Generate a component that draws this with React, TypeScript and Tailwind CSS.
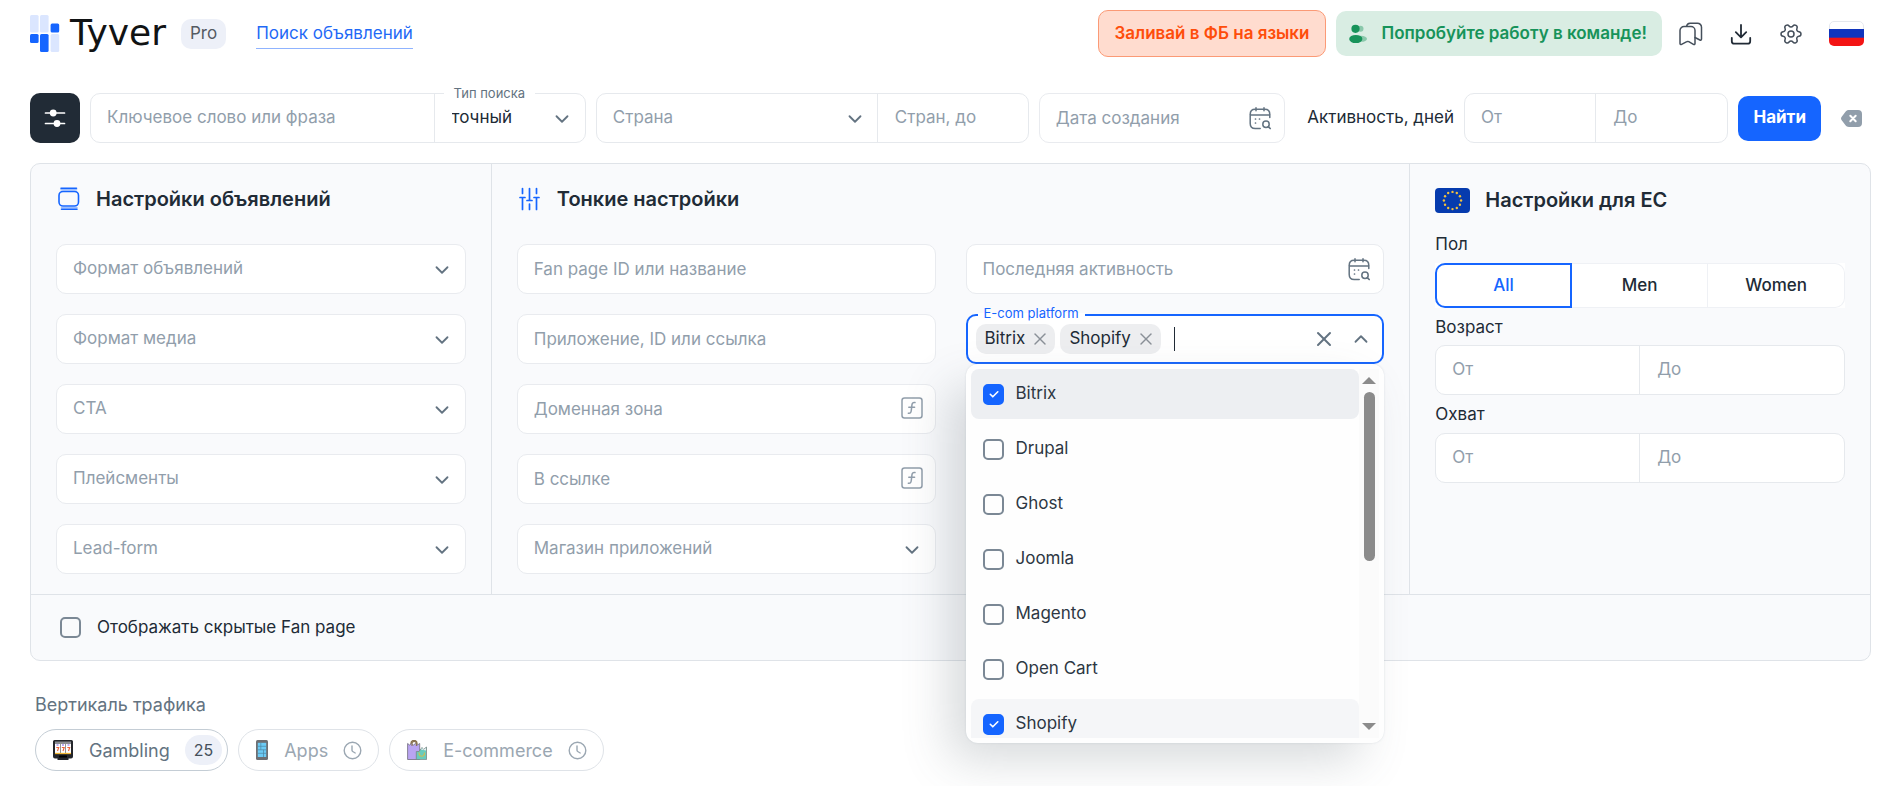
import { useState } from 'react';
import type { ReactNode } from 'react';
import { ChevronDown, ChevronUp, Settings, X } from 'lucide-react';

const platforms = ['Bitrix', 'Drupal', 'Ghost', 'Joomla', 'Magento', 'Open Cart', 'Shopify'];

function CalendarSearchIcon() {
  return (
    <svg width="24" height="24" viewBox="0 0 24 24" fill="none" stroke="#637381" strokeWidth="1.5" strokeLinecap="round" aria-hidden="true">
      <path d="M8 1.8v3M16 1.8v3M2 9h20M21.8 11.5V8.5c0-3-1.5-5.2-5-5.2H7.2c-3.500 0-5 2.200-5 5.200v9c0 3 1.500 5 5 5h5" />
      <circle cx="18" cy="18.300" r="3.200" />
      <path d="M20.500 20.800l1.700 1.700M7.500 13h.01M11.500 13h.01M7.500 17h.01" strokeWidth="1.700" />
    </svg>
  );
}

function FunctionIcon() {
  return (
    <svg width="22" height="22" viewBox="0 0 22 22" fill="none" stroke="#919eab" strokeWidth="1.500" strokeLinecap="round" aria-hidden="true">
      <rect x="1" y="1" width="20" height="20" rx="2.500" />
      <path d="M14 5.500c-2.200-.4-2.900.7-3.100 2.600l-.6 5.200c-.2 2.200-1 3.200-3 2.900M7.800 10.200h5.800" />
    </svg>
  );
}

function Logo() {
  return (
    <svg width="30" height="38" viewBox="0 0 30 38" aria-hidden="true">
      <g fill="#dbe6ff">
        <rect x="0" y="0" width="8.600" height="17.500" rx="1.500" />
        <rect x="10" y="0" width="8.600" height="17.500" rx="1.500" />
        <rect x="20.600" y="19" width="8.600" height="18" rx="1.500" />
      </g>
      <g fill="#1565ff">
        <rect x="20.600" y="8.500" width="8.600" height="9" rx="1.500" />
        <rect x="0" y="19" width="8.600" height="9" rx="1.500" />
        <rect x="10" y="19" width="8.600" height="18" rx="1.500" />
      </g>
    </svg>
  );
}

function SelectField({ label, id }: { label: string; id: string }) {
  return (
    <div className="relative">
      <select
        id={id}
        aria-label={label}
        className="h-[50px] w-full appearance-none rounded-[10px] border border-[#e9ebef] bg-white pr-12 pl-4 text-[#919eab] outline-none"
      >
        <option>{label}</option>
      </select>
      <ChevronDown size={22} className="pointer-events-none absolute top-[15px] right-[13px] text-[#637381]" />
    </div>
  );
}

function TextField({ label, icon }: { label: string; icon?: ReactNode }) {
  return (
    <div className="relative">
      <input
        type="text"
        aria-label={label}
        placeholder={label}
        className="h-[50px] w-full rounded-[10px] border border-[#e9ebef] bg-white pr-12 pl-4 text-[#212b36] outline-none placeholder:text-[#919eab]"
      />
      {icon && <span className="absolute top-[13px] right-[13px]">{icon}</span>}
    </div>
  );
}

function RangeField({ name }: { name: string }) {
  return (
    <div className="grid h-[50px] w-full grid-cols-2 rounded-[10px] border border-[#e6e9ed] bg-white">
      <input
        type="text"
        aria-label={`${name} от`}
        placeholder="От"
        className="min-w-0 border-r border-[#e6e9ed] bg-transparent pl-4 outline-none placeholder:text-[#919eab]"
      />
      <input
        type="text"
        aria-label={`${name} до`}
        placeholder="До"
        className="min-w-0 bg-transparent pl-[17px] outline-none placeholder:text-[#919eab]"
      />
    </div>
  );
}

function CheckBox({ checked, onChange, id }: { checked: boolean; onChange: () => void; id: string }) {
  return (
    <span className="relative flex size-[22px] shrink-0 items-center justify-center">
      <input
        id={id}
        type="checkbox"
        checked={checked}
        onChange={onChange}
        className="size-[21px] appearance-none rounded-[5px] border-2 border-[#7b8895] checked:border-[#1565ff] checked:bg-[#1565ff]"
      />
      {checked && (
        <svg className="pointer-events-none absolute" width="22" height="22" viewBox="0 0 22 22" fill="none" stroke="#fff" strokeWidth="1.600" strokeLinecap="round" strokeLinejoin="round" aria-hidden="true">
          <path d="M7.300 11.300l2.500 2.500 5-5" />
        </svg>
      )}
    </span>
  );
}

function Header() {
  return (
    <header className="flex h-[67px] items-center pr-9 pl-[30px]">
      <a href="#home" className="flex items-center">
        <Logo />
        <span className="ml-[10px] pb-[2px] font-['DejaVu_Sans',sans-serif] text-[36px] leading-10 text-[#111314]">Tyver</span>
      </a>
      <span className="ml-[15px] flex h-[30px] items-center rounded-[10px] bg-[#edf0f8] px-[9px] text-[#555b63]">Pro</span>
      <a href="#search" className="ml-[30px] border-b border-[#8fb3ff] leading-[30px] text-[#1f69f6]">
        Поиск объявлений
      </a>
      <div className="ml-auto flex items-center gap-[10px] text-[17px] font-semibold">
        <button type="button" className="h-[47px] rounded-[10px] border border-[#fb9a76] bg-[#ffdccf] px-4 text-[#fe4d0b]">
          Заливай в ФБ на языки
        </button>
        <button type="button" className="flex h-[45px] items-center gap-[14px] rounded-[10px] bg-[#d9ede3] pr-[15px] pl-[13px] text-[#17935a]">
          <svg width="18" height="20" viewBox="0 0 18 20" aria-hidden="true">
            <g fill="#17935a" opacity=".4">
              <circle cx="11.500" cy="4.800" r="3" />
              <ellipse cx="12" cy="14.800" rx="6" ry="3" />
            </g>
            <circle cx="6.500" cy="4.800" r="4.100" fill="#17935a" />
            <ellipse cx="6.800" cy="15" rx="6.600" ry="4.100" fill="#17935a" />
          </svg>
          Попробуйте работу в команде!
        </button>
      </div>
      <div className="ml-[17px] flex items-center gap-[26px] text-[#454f5b]">
        <button type="button" aria-label="Закладки">
          <svg width="24" height="24" viewBox="0 0 24 24" fill="none" stroke="currentColor" strokeWidth="1.500" strokeLinejoin="round" strokeLinecap="round" aria-hidden="true">
            <path d="M1 8.500a4 4 0 0 1 4-4h7a4 4 0 0 1 4 4v13c0 1-.8 1.300-1.600.9l-4.600-2.700a2 2 0 0 0-2 0l-5.200 2.700c-.9.4-1.600 0-1.600-.9z" />
            <path d="M7.500 4.300A4 4 0 0 1 11 1.200h7.500a4 4 0 0 1 4 4V17c0 1.100-.8 1.400-1.600 1L16 15.500" />
          </svg>
        </button>
        <button type="button" aria-label="Скачать" className="text-[#212b36]">
          <svg width="24" height="24" viewBox="0 0 24 24" fill="none" stroke="currentColor" strokeWidth="1.800" strokeLinejoin="round" strokeLinecap="round" aria-hidden="true">
            <path d="M12 3v12M6.800 10.200L12 15.300l5.200-5.100M2.800 15.800v3.400a2.500 2.500 0 0 0 2.500 2.500h13.400a2.500 2.500 0 0 0 2.500-2.500v-3.400" />
          </svg>
        </button>
        <button type="button" aria-label="Настройки">
          <Settings size={24} strokeWidth={1.5} className="rotate-90" />
        </button>
        <button type="button" aria-label="Язык: русский">
          <svg width="35" height="25" viewBox="0 0 35 25" aria-hidden="true">
            <clipPath id="ru">
              <rect width="35" height="25" rx="5" />
            </clipPath>
            <g clipPath="url(#ru)">
              <rect width="35" height="25" fill="#fff" />
              <rect y="8" width="35" height="9" fill="#1035bd" />
              <rect y="16.700" width="35" height="8.300" fill="#f31414" />
            </g>
            <path d="M.5 8V5A4.500 4.500 0 0 1 5 .5h25A4.500 4.500 0 0 1 34.500 5v3" fill="none" stroke="#e5e8ed" />
          </svg>
        </button>
      </div>
    </header>
  );
}

function SearchBar() {
  return (
    <form className="mt-[26px] flex items-center gap-[10px] pr-[38px] pl-[30px]">
      <button type="button" aria-label="Фильтры" className="flex size-[50px] shrink-0 items-center justify-center rounded-[10px] bg-[#212b36]">
        <svg width="22" height="22" viewBox="0 0 22 22" stroke="#fff" strokeWidth="1.700" fill="#fff" strokeLinecap="round" aria-hidden="true">
          <path d="M1.500 6h19M1.500 16.500h19" />
          <circle cx="9.200" cy="6" r="3.400" stroke="none" />
          <circle cx="13" cy="16.500" r="3.400" stroke="none" />
        </svg>
      </button>
      <div className="grid h-[50px] min-w-0 flex-[495_1_0%] grid-cols-[minmax(0,343fr)_minmax(0,150fr)] rounded-[10px] border border-[#e6e9ed]">
        <input
          type="text"
          aria-label="Ключевое слово или фраза"
          placeholder="Ключевое слово или фраза"
          className="min-w-0 border-r border-[#e6e9ed] bg-transparent pl-4 outline-none placeholder:text-[#919eab]"
        />
        <div className="relative min-w-0">
          <label htmlFor="match" className="absolute -top-[10px] left-[9px] bg-white px-[10px] text-[13px] leading-[18px] whitespace-nowrap text-[#637381]">
            Тип поиска
          </label>
          <select id="match" className="h-full w-full appearance-none bg-transparent pl-[17px] text-[#212b36] outline-none">
            <option>точный</option>
          </select>
          <ChevronDown size={22} className="pointer-events-none absolute top-[14px] right-[12px] text-[#637381]" />
        </div>
      </div>
      <div className="grid h-[50px] min-w-0 flex-[432_1_0%] grid-cols-[minmax(0,281fr)_minmax(0,150fr)] rounded-[10px] border border-[#e6e9ed]">
        <div className="relative min-w-0 border-r border-[#e6e9ed]">
          <select aria-label="Страна" className="h-full w-full appearance-none bg-transparent pl-4 text-[#919eab] outline-none">
            <option>Страна</option>
          </select>
          <ChevronDown size={22} className="pointer-events-none absolute top-[14px] right-[11px] text-[#637381]" />
        </div>
        <input
          type="text"
          aria-label="Стран, до"
          placeholder="Стран, до"
          className="min-w-0 bg-transparent pl-[17px] outline-none placeholder:text-[#919eab]"
        />
      </div>
      <div className="min-w-0 flex-[247_1_0%]">
        <TextField label="Дата создания" icon={<CalendarSearchIcon />} />
      </div>
      <span className="ml-3 whitespace-nowrap text-[#212b36]">Активность, дней</span>
      <div className="min-w-0 flex-[265_1_0%]">
        <RangeField name="Активность" />
      </div>
      <button type="submit" className="h-[45px] rounded-[10px] bg-[#1565ff] px-[15px] font-bold text-white">
        Найти
      </button>
      <button type="reset" aria-label="Очистить" className="ml-[10px]">
        <svg width="21" height="17" viewBox="0 0 21 17" aria-hidden="true">
          <path d="M8 0h9a4 4 0 0 1 4 4v9a4 4 0 0 1-4 4H8c-1.600 0-2.600-.7-3.500-1.700L.9 10.500a3 3 0 0 1 0-4L4.500 1.700C5.400.7 6.400 0 8 0z" fill="#919eab" />
          <path d="M9.300 5.700l5.400 5.600M14.700 5.700l-5.400 5.600" stroke="#fff" strokeWidth="2" strokeLinecap="round" />
        </svg>
      </button>
    </form>
  );
}

function SectionTitle({ icon, children }: { icon: ReactNode; children: ReactNode }) {
  return (
    <h2 className="flex h-7 items-center text-[20px] font-semibold text-[#212b36]">
      {icon}
      {children}
    </h2>
  );
}

function PlatformPicker() {
  const [picked, setPicked] = useState<string[]>(['Bitrix', 'Shopify']);
  const toggle = (name: string) =>
    setPicked((list) => (list.includes(name) ? list.filter((item) => item !== name) : [...list, name]));

  return (
    <div className="relative">
      <div className="flex h-[50px] items-center gap-[5px] rounded-[10px] border-2 border-[#1565ff] bg-white pr-[10px] pl-2">
        {picked.map((name) => (
          <span key={name} className="flex h-[30px] items-center gap-[5px] rounded-[10px] bg-[#edeef0] pr-[5px] pl-[9px] text-[#212b36]">
            {name}
            <button type="button" aria-label={`Убрать ${name}`} onClick={() => toggle(name)} className="text-[#8a9097]">
              <X size={20} strokeWidth={1.7} />
            </button>
          </span>
        ))}
        <span className="ml-2 h-6 w-px bg-[#212b36]" />
        <input id="platform" type="text" className="min-w-0 flex-1 bg-transparent outline-none" />
        <button type="button" aria-label="Очистить выбор" onClick={() => setPicked([])} className="text-[#637381]">
          <X size={24} strokeWidth={2} />
        </button>
        <button type="button" aria-label="Свернуть список" className="ml-[9px] text-[#637381]">
          <ChevronUp size={22} />
        </button>
      </div>
      <label htmlFor="platform" className="absolute -top-[10px] left-[12px] bg-linear-to-b from-[#f9fafc] from-50% to-white to-50% px-[6px] text-[13px] leading-[18px] text-[#1565ff]">
        E-com platform
      </label>
      <div className="absolute top-[50px] right-0 left-0 z-10 flex h-[379px] rounded-[12px] bg-[#fefefe] p-[5px] shadow-[0_0_2px_0_rgba(145,158,171,0.3),-20px_20px_48px_-4px_rgba(85,95,105,0.24)]">
        <ul className="flex-1 overflow-hidden">
          {platforms.map((name, index) => {
            const on = picked.includes(name);
            const fill = on ? (index === 0 ? 'bg-[#edeff2]' : 'bg-[#f5f6f8]') : '';
            return (
              <li key={name} className="mb-[5px]">
                <label className={`flex h-[50px] items-center gap-[11px] rounded-[8px] pl-3 text-[#2d3743] ${fill}`}>
                  <CheckBox id={`platform-${index}`} checked={on} onChange={() => toggle(name)} />
                  {name}
                </label>
              </li>
            );
          })}
        </ul>
        <div className="flex w-5 flex-col items-center bg-[#fbfbfb] py-2" aria-hidden="true">
          <span className="border-x-[7px] border-b-[7px] border-x-transparent border-b-[#8b8b8b]" />
          <span className="mt-2 h-[169px] w-[11px] rounded-full bg-[#8b8b8b]" />
          <span className="mt-auto border-x-[7px] border-t-[7px] border-x-transparent border-t-[#8b8b8b]" />
        </div>
      </div>
    </div>
  );
}

function AdSettings() {
  const items = ['Формат объявлений', 'Формат медиа', 'CTA', 'Плейсменты', 'Lead-form'];
  return (
    <section className="px-[25px] pt-[21px] pb-5">
      <SectionTitle
        icon={
          <svg className="mr-[15px]" width="25" height="24" viewBox="0 0 25 24" fill="none" stroke="#1565ff" strokeWidth="1.600" strokeLinecap="round" aria-hidden="true">
            <rect x="3" y="4.500" width="19.500" height="14.500" rx="4" />
            <path d="M5 1.200h15.500M5.500 22.300h15.500" />
            <path d="M5 2.700h15.500M5.500 20.800h15.500" opacity=".4" />
          </svg>
        }
      >
        Настройки объявлений
      </SectionTitle>
      <div className="mt-[31px] flex flex-col gap-5">
        {items.map((label, index) => (
          <SelectField key={label} label={label} id={`ad-${index}`} />
        ))}
      </div>
    </section>
  );
}

function FineSettings() {
  return (
    <section className="col-span-2 border-x border-[#dfe3e8] px-[25px] pt-[21px] pb-5">
      <SectionTitle
        icon={
          <svg className="mr-4 ml-px" width="23" height="24" viewBox="0 0 23 24" fill="none" stroke="#1565ff" strokeWidth="1.700" strokeLinecap="round" aria-hidden="true">
            <path d="M4.500 1.500v5M4.500 10.500v12M2 10.500h5M11.500 1.500v12M9 13.500h5M11.500 17v5.500M18.500 1.500v5M18.500 10.500v12M16 10.500h5" />
          </svg>
        }
      >
        Тонкие настройки
      </SectionTitle>
      <div className="mt-[31px] grid grid-cols-2 gap-[30px]">
        <div className="flex flex-col gap-5">
          <TextField label="Fan page ID или название" />
          <TextField label="Приложение, ID или ссылка" />
          <TextField label="Доменная зона" icon={<FunctionIcon />} />
          <TextField label="В ссылке" icon={<FunctionIcon />} />
          <SelectField label="Магазин приложений" id="store" />
        </div>
        <div className="flex flex-col gap-5">
          <TextField label="Последняя активность" icon={<CalendarSearchIcon />} />
          <PlatformPicker />
        </div>
      </div>
    </section>
  );
}

function EuSettings() {
  const [gender, setGender] = useState('All');
  const stars = Array.from({ length: 12 }, (_, i) => {
    const angle = (i * Math.PI) / 6;
    return { x: 17.5 + 8.6 * Math.sin(angle), y: 12.5 - 8.6 * Math.cos(angle) };
  });
  return (
    <section className="px-[25px] pt-[22px] pb-5 text-[#212b36]">
      <SectionTitle
        icon={
          <svg className="mr-[15px]" width="35" height="25" viewBox="0 0 35 25" aria-hidden="true">
            <rect width="35" height="25" rx="4" fill="#063bae" />
            {stars.map((star, i) => (
              <circle key={i} cx={star.x} cy={star.y} r="1.200" fill="#f0c03e" />
            ))}
          </svg>
        }
      >
        Настройки для ЕС
      </SectionTitle>
      <div className="mt-[18px] leading-6">Пол</div>
      <div className="mt-[7px] grid h-[45px] grid-cols-3 bg-white">
        {['All', 'Men', 'Women'].map((name) => (
          <button
            key={name}
            type="button"
            aria-pressed={gender === name}
            onClick={() => setGender(name)}
            className={`font-medium first:rounded-l-[10px] last:rounded-r-[10px] ${
              gender === name ? 'border-2 border-[#1565ff] text-[#1565ff]' : 'border border-l-0 border-[#eff1f5]'
            }`}
          >
            {name}
          </button>
        ))}
      </div>
      <div className="mt-[7px] mb-[6px] leading-6">Возраст</div>
      <RangeField name="Возраст" />
      <div className="mt-[7px] mb-[7px] leading-6">Охват</div>
      <RangeField name="Охват" />
    </section>
  );
}

function ClockIcon() {
  return (
    <svg width="19" height="19" viewBox="0 0 19 19" fill="none" stroke="currentColor" strokeWidth="1.400" strokeLinecap="round" aria-hidden="true">
      <circle cx="9.500" cy="9.500" r="8.300" />
      <path d="M9 5v4.300c0 .6.200.9.700 1.200l2.500 1.500" />
    </svg>
  );
}

function Verticals() {
  return (
    <section className="mt-8 pl-[35px] text-[18px]">
      <h3 className="leading-6 text-[#637381]">Вертикаль трафика</h3>
      <div className="mt-3 flex gap-[10px]">
        <button type="button" className="flex h-[42px] items-center rounded-full border border-[#c4cdd5] pr-[5px] pl-[17px] text-[#637381]">
          <svg width="20" height="20" viewBox="0 0 20 20" aria-hidden="true">
            <path d="M1.500 0h17A1.500 1.500 0 0 1 20 1.500v15a2 2 0 0 1-2 2h-2.500V20h-11v-1.500H2a2 2 0 0 1-2-2v-15A1.500 1.500 0 0 1 1.500 0z" fill="#24262b" />
            <rect x="2" y="1.500" width="16" height="2.500" fill="#8b8d92" />
            <rect x="2" y="4" width="5" height="10" fill="#fff" />
            <rect x="7.500" y="4" width="5" height="10" fill="#fff" />
            <rect x="13" y="4" width="5" height="10" fill="#fff" />
            <path d="M3.300 7.500h2.400l-1.200 3.500M8.800 7.500h2.400L10 11M14.300 7.500h2.400L15.500 11" fill="none" stroke="#f0633a" strokeWidth="1.100" />
            <path d="M3.500 5h2M9 5h2M14.500 5h2" stroke="#7a5cf0" />
            <path d="M2 13.500h16" stroke="#f2b632" strokeWidth="1.300" />
            <rect x="6" y="15.500" width="8" height="2" rx=".5" fill="#000" />
          </svg>
          <span className="ml-4">Gambling</span>
          <span className="ml-[15px] flex h-[30px] items-center rounded-full bg-[#edf0f8] px-[9px] text-[16px] text-[#454f5b]">25</span>
        </button>
        <button type="button" className="flex h-[42px] items-center rounded-full border border-[#dfe3e8] pr-4 pl-[17px] text-[#9ba7b2]">
          <svg width="12" height="20" viewBox="0 0 12 20" aria-hidden="true">
            <rect width="12" height="20" rx="1.500" fill="#6d6f73" />
            <rect x="1.800" y="2.800" width="8.400" height="14.200" fill="#6ccbf5" />
            <path d="M1.800 6.300h8.400M1.800 9.800h8.400M1.800 13.300h8.400M4.800 2.800v7M7.500 9.800v7.200" stroke="#4a87a5" strokeWidth=".7" />
          </svg>
          <span className="mr-[15px] ml-4">Apps</span>
          <ClockIcon />
        </button>
        <button type="button" className="flex h-[42px] items-center rounded-full border border-[#dfe3e8] pr-4 pl-[17px] text-[#9ba7b2]">
          <svg width="20" height="20" viewBox="0 0 20 20" aria-hidden="true">
            <path d="M4 5V3.500a3 3 0 0 1 6 0V5" fill="none" stroke="#8a7351" strokeWidth="1.400" />
            <path d="M.6 3.500L2.500 5l2-1.500L6.500 5l2-1.500 2 1.500 2.200-1.500v16H.6z" fill="#b9a4f2" stroke="#7c7789" strokeWidth=".9" />
            <path d="M5 6V3.600a2.200 2.200 0 0 1 4.400 0V6" fill="none" stroke="#8a7351" strokeWidth="1.100" />
            <path d="M9.300 11.500h2.700l3-4 1.500 2 3-2.500v12.600H9.300z" fill="#68cbbd" stroke="#7b8785" strokeWidth=".8" />
            <path d="M14 9.500l1-1.500 1.500 1.700 2.500-1.700v2.500z" fill="#eef0f3" />
            <path d="M12 12.500c0 5 5.500 5 5.500 0" fill="none" stroke="#cdbd55" strokeWidth="1.200" />
          </svg>
          <span className="mr-[15px] ml-4">E-commerce</span>
          <ClockIcon />
        </button>
      </div>
    </section>
  );
}

export default function App() {
  const [showHidden, setShowHidden] = useState(false);
  return (
    <div className="min-h-screen overflow-x-clip bg-white font-[Inter,sans-serif] text-[17px] text-[#212b36]">
      <Header />
      <main>
        <SearchBar />
        <div className="mt-5 mr-[29px] ml-[30px] rounded-[10px] border border-[#dfe3e8] bg-[#f9fafc]">
          <div className="grid grid-cols-4">
            <AdSettings />
            <FineSettings />
            <EuSettings />
          </div>
          <div className="flex h-[66px] items-center border-t border-[#dfe3e8] pl-[28px]">
            <label htmlFor="hidden" className="flex items-center gap-4">
              <CheckBox id="hidden" checked={showHidden} onChange={() => setShowHidden(!showHidden)} />
              Отображать скрытые Fan page
            </label>
          </div>
        </div>
        <Verticals />
      </main>
    </div>
  );
}
